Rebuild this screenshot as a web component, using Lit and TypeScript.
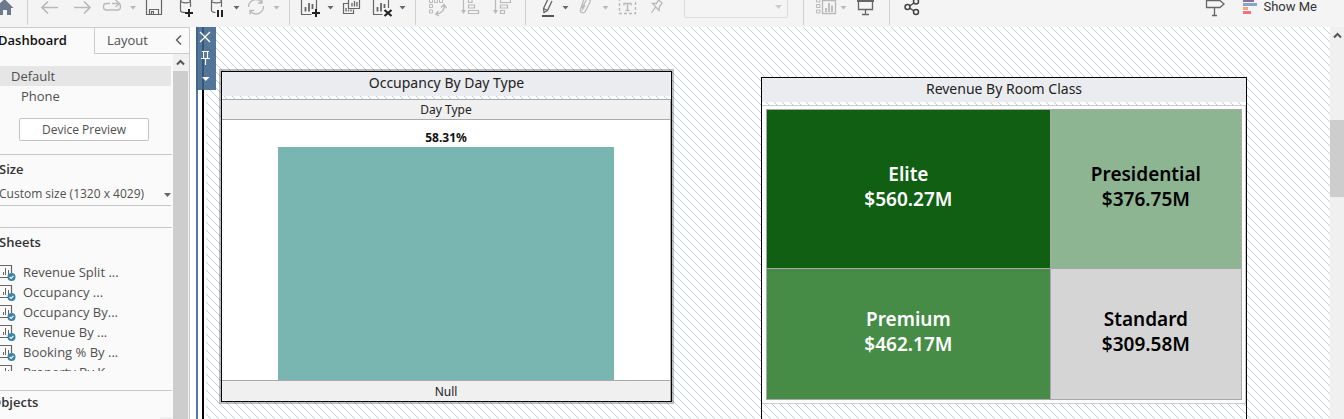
import { LitElement, html, svg, css } from "lit";
import { customElement } from "lit/decorators.js";

const DARK = "#666";
const LIGHT = "#b9b9b9";

const caret = (x: number, color: string) => svg`<path d="M${x - 3} 6h6l-3 3.5z" fill=${color} />`;

/* Toolbar buttons, in groups; each is drawn in a box 27px high. */
interface Tool { label: string; width: number; art: unknown; }

const GROUPS: Tool[][] = [
  [{ label: "Home", width: 27, art: svg`<path d="M4.500-1L13.500 8H11v7H7V10H3v5H-1V8h-4z" fill="#6c7a8c" />` }],
  [
    { label: "Undo", width: 32, art: svg`<path d="M30 7.500H14.500M20 1.500l-6 6 6 6" stroke=${LIGHT} stroke-width="1.700" fill="none" />` },
    { label: "Redo", width: 36, art: svg`<path d="M14 7.500H29.500M24 1.500l6 6-6 6" stroke=${LIGHT} stroke-width="1.700" fill="none" />` },
    { label: "Replay", width: 46, art: svg`<path d="M14 3.500H10.500a3 3 0 0 0-3 3v.500a3 3 0 0 0 3 3h11a3 3 0 0 0 3-3v-.500a3 3 0 0 0-3-3H16M19.500 0l4 3.500-4 3.500" stroke=${LIGHT} stroke-width="1.300" fill="none" />${caret(37, LIGHT)}` },
    { label: "Save", width: 28, art: svg`<path d="M4.500-2V14.500h15V-2M7.500 14V9.500h9V14M9.500 14v-2.500h2V14" stroke=${DARK} stroke-width="1.200" fill="none" />` },
    { label: "New data source", width: 32, art: svg`<path d="M10.500 1.500v9c0 1 2 2 5 2M20.500 1.500V7" stroke=${DARK} stroke-width="1.200" fill="none" /><ellipse cx="15.500" cy="1" rx="5" ry="1.800" stroke=${DARK} stroke-width="1.200" fill="none" /><path d="M19 9v8M15 13h8" stroke="#222" stroke-width="2" />` },
    { label: "Pause updates", width: 43, art: svg`<path d="M9.500 1.500v9c0 1 2 2 4 2M19.500 1.500V7" stroke=${DARK} stroke-width="1.200" fill="none" /><ellipse cx="14.500" cy="1" rx="5" ry="1.800" stroke=${DARK} stroke-width="1.200" fill="none" /><path d="M16 10v7M20 10v7" stroke="#222" stroke-width="2" />${caret(34.5, DARK)}` },
    { label: "Refresh", width: 44, art: svg`<path d="M3.500 7a7.500 7.500 0 0 1 13-5M18.500 6a7.500 7.500 0 0 1-13 5.500M17 -1v4h-4M5 14.500v-4h4" stroke=${LIGHT} stroke-width="1.300" fill="none" />${caret(31.5, LIGHT)}` },
  ],
  [
    { label: "New worksheet", width: 49, art: svg`<path d="M11.500-2V14.500h10M26.500-2V9" stroke=${DARK} stroke-width="1.200" fill="none" /><path d="M15.500 7v4.500M19 3v8.500M22.500 4v5" stroke=${DARK} stroke-width="1.800" /><path d="M26 9v8M22 13h8" stroke="#222" stroke-width="2" />${caret(40.5, DARK)}` },
    { label: "Duplicate", width: 27, art: svg`<path d="M9.500 3.500h-5v10h10v-4M9.500-2V8.500h11V-2" stroke=${DARK} stroke-width="1.200" fill="none" /><path d="M7 8v3.500M9.500 9.500v2M12 9.500v2M13 3v3.500M15.500 1v5.500M18 2v4.500" stroke=${DARK} stroke-width="1.300" />` },
    { label: "Clear sheet", width: 49, art: svg`<path d="M7.500-2V14.500h9M22.500-2V8" stroke=${DARK} stroke-width="1.200" fill="none" /><path d="M11.500 7v4.500M15 3v8.500M18.500 4v4" stroke=${DARK} stroke-width="1.800" /><path d="M18.500 10l7 6M25.500 10l-7 6" stroke="#222" stroke-width="2.200" />${caret(36.5, DARK)}` },
  ],
  [
    { label: "Swap", width: 38, art: svg`<path d="M13.500-.500h3v3h-3zM18.500-.500h3v3h-3zM23.500-.500h3v3h-3zM13.500 4.500h3v3h-3zM13.500 10h3v3h-3z" stroke=${LIGHT} fill="none" /><path d="M28 5c1 5-3 9-8 9M22.500 11l-3 3 3.500 2M25 7.500l3-3 2.500 3.500" stroke=${LIGHT} stroke-width="1.300" fill="none" />` },
    { label: "Sort ascending", width: 31, art: svg`<path d="M9.500-1V11" stroke=${LIGHT} stroke-width="1.200" /><path d="M7 10h5l-2.500 4z" fill=${LIGHT} /><path d="M14.500-.500h3.500v3h-3.500zM14.500 5h6v3h-6zM14.500 10.500h10v3h-10z" stroke=${LIGHT} stroke-width="1.200" fill="none" />` },
    { label: "Sort descending", width: 40, art: svg`<path d="M10.500-1V11" stroke=${LIGHT} stroke-width="1.200" /><path d="M8 10h5l-2.500 4z" fill=${LIGHT} /><path d="M15.500-.500h10v3h-10zM15.500 5h7v3h-7zM15.500 10.500h4v3h-4z" stroke=${LIGHT} stroke-width="1.200" fill="none" />` },
  ],
  [
    { label: "Highlight", width: 48, art: svg`<path d="M22-1L17.500 8.500l.500 4 3.500-2L26 1M17.500 8.500l4 2" stroke=${DARK} stroke-width="1.300" fill="none" /><path d="M16 16h12" stroke="#555" stroke-width="2" />${caret(39.5, DARK)}` },
    { label: "Group", width: 41, art: svg`<path d="M8 8l4-7.500a2 2 0 0 1 4 1.500l-4.500 9a2.500 2.500 0 0 1-5-1.500L10-1M11 5L8 10.500" stroke=${LIGHT} stroke-width="1.200" fill="none" />${caret(31.5, LIGHT)}` },
    { label: "Show mark labels", width: 32, art: svg`<path d="M4.500-2V13.500h16V-2" stroke=${LIGHT} stroke-width="1.400" stroke-dasharray="3 2" fill="none" /><path d="M9 5.500V3.500h7V5.500M12.500 3.500v7M10.500 10.500h4" stroke=${LIGHT} stroke-width="1.400" fill="none" />` },
    { label: "Fix axes", width: 37, art: svg`<path d="M10.500-1L15.500 3.500M11.500 0L9.500 3.500 5.500 3.500l6.500 7 .500-4L15 3.500M8.500 7L4.500 13" stroke=${LIGHT} stroke-width="1.300" fill="none" />` },
  ],
  [
    { label: "Show cards", width: 48, art: svg`<path d="M12.500-1h3.500v3h-3.500zM12.500 4.500h3.500v3h-3.500zM12.500 10h3.500v3h-3.500z" stroke=${LIGHT} fill="none" /><path d="M18.500 .500h13v13h-13z" stroke=${LIGHT} stroke-width="1.300" fill="none" /><path d="M22 8v4M25 3v9M28 5.500v6.500" stroke=${LIGHT} stroke-width="1.800" />${caret(39.5, LIGHT)}` },
    { label: "Presentation mode", width: 37, art: svg`<path d="M5 1h17" stroke=${DARK} stroke-width="2" /><path d="M6.500 1V9.500h14V1M13.500 9.500v5M10 14.500h7" stroke=${DARK} stroke-width="1.300" fill="none" />` },
  ],
  [{ label: "Share", width: 40, art: svg`<g stroke="#444" stroke-width="1.500" fill="none"><circle cx="17.500" cy="7" r="2.500" /><circle cx="26" cy="1.500" r="2.500" /><circle cx="26" cy="12" r="2.500" /><path d="M19.500 6L24 3M19.500 8L24 11" /></g>` }],
];

const SHEETS = ["Revenue Split ...", "Occupancy ...", "Occupancy By...", "Revenue By ...", "Booking % By ...", "Property By K..."];

const ROOMS = [
  { name: "Elite", value: "$560.27M", tone: "elite" },
  { name: "Presidential", value: "$376.75M", tone: "presidential" },
  { name: "Premium", value: "$462.17M", tone: "premium" },
  { name: "Standard", value: "$309.58M", tone: "standard" },
];

const upArrow = html`<svg width="15" height="17" viewBox="0 0 15 17" aria-hidden="true"><path d="M4 10.500l3.500-3.500 3.500 3.500" stroke="#555" stroke-width="2" fill="none" /></svg>`;

@customElement("tool-bar")
export class ToolBar extends LitElement {
  static styles = css`
    :host { display: flex; height: 27px; overflow: hidden; background: #f4f4f4; }
    .group { display: flex; }
    .rule { width: 1px; height: 25px; background: #d0d0d0; }
    button { border: 0; padding: 0; background: none; height: 27px; display: block; }
    svg { display: block; }
    .fit { width: 104px; height: 30px; margin: -12px 15px 0 0; border: 1px solid #d4d4d4; border-radius: 2px; appearance: none; background: #f4f4f4; }
    .fitbox { display: grid; }
    .fitbox > * { grid-area: 1 / 1; }
    .fitbox svg { pointer-events: none; z-index: 1; margin-left: 86px; }
    .spacer { flex: 1; }
    .show { display: flex; margin-right: 27px; }
    .show span { font: 13px/14px Roboto, sans-serif; color: #333; }
  `;
  render() {
    return html`
      ${GROUPS.map((g, i) => html`
        <div class="group">
          ${g.map((t) => html`<button aria-label=${t.label}>
            <svg width=${t.width} height="27" viewBox="0 0 ${t.width} 27">${t.art}</svg>
          </button>`)}
          ${i === 4 ? html`<div class="fitbox">
            <select class="fit" aria-label="Fit" disabled><option></option></select>
            <svg width="16" height="27" viewBox="0 0 16 27"><path d="M5 5h7l-3.500 4z" fill="#ccc" /></svg>
          </div>` : ""}
        </div>
        ${i < GROUPS.length - 1 ? html`<div class="rule"></div>` : ""}`)}
      <div class="spacer"></div>
      <button aria-label="Data guide">
        <svg width="36" height="27" viewBox="0 0 36 27"><path d="M5.500 .500h13.500l4 3.500-4 3.500H5.500zM13.500 8v7M11 15.500h5" stroke="#666" stroke-width="1.300" fill="none" /></svg>
      </button>
      <button class="show">
        <svg width="26" height="27" viewBox="0 0 26 27">
          <path d="M6 0h11v2H6z" fill="#8c6d9b" /><path d="M6 3h14v3H6z" fill="#85a5cb" />
          <path d="M6 7h5v3H6z" fill="#f5a57c" /><path d="M6 11h8v3H6z" fill="#f76f82" />
        </svg>
        <span>Show Me</span>
      </button>`;
  }
}

@customElement("side-pane")
export class SidePane extends LitElement {
  static styles = css`
    :host { display: flex; flex-direction: column; width: 190px; box-sizing: border-box; border-right: 1px solid #ccc; background: #fafafa; font: 13px/20px "Open Sans", sans-serif; color: #505050; overflow: hidden; }
    button, select { font: inherit; color: inherit; }
    .tabs { display: flex; border-top: 1px solid #ccc; height: 27px; box-sizing: border-box; }
    .tab { border: 0; padding: 0 0 2px; background: none; text-align: left; }
    .on { width: 94px; margin-left: -2px; flex: none; font-weight: 600; color: #111; margin-right: 2px; }
    .rest { flex: 1; display: flex; justify-content: space-between; border: 1px solid #ccc; border-width: 0 0 1px 1px; padding: 0 4px 0 12px; }
    .body { display: flex; flex: 1; }
    .content { flex: 1; min-width: 0; padding-top: 12px; overflow: hidden; }
    .bar { width: 16px; background: #f0f0f0; }
    .bar svg { display: block; }
    .thumb { height: 348px; background: #cdcdcd; margin-right: 1px; }
    .device { display: block; width: 171px; border: 0; background: none; text-align: left; padding: 0 0 0 11px; }
    .device.active { background: #e6e6e6; }
    .device.sub { padding-left: 21px; }
    .preview { display: block; margin: 12px 0 13px 19px; width: 130px; height: 23px; border: 1px solid #c4c4c4; border-radius: 2px; background: #fff; padding: 0; font-size: 12px; line-height: 19px; }
    h2 { margin: 0; font: inherit; font-weight: 600; color: #333; }
    section { border-top: 1px solid #c8c8c8; margin: 0 1px 0 -9px; padding: 4px 0 0 8px; }
    .size { padding-bottom: 21px; }
    .pick { display: grid; margin-top: 5px; border-bottom: 1px solid #c4c4c4; margin-right: 1px; }
    .pick > * { grid-area: 1 / 1; }
    .pick select { appearance: none; border: 0; background: none; padding: 0 0 1px; height: 21px; font-size: 12px; }
    .pick svg { justify-self: end; align-self: center; pointer-events: none; }
    ul { list-style: none; margin: 10px 0 0; padding: 0; height: 109px; overflow: hidden; }
    li { display: flex; gap: 7px; }
    .sheets { padding-bottom: 19px; }
    .objects { padding: 1px 0 0; }
    .stub { height: 4px; width: 12px; margin: 5px 0 0 auto; background: #f0f0f0; }
  `;
  render() {
    return html`
      <div class="tabs" role="tablist">
        <button class="tab on" role="tab" aria-selected="true">Dashboard</button>
        <div class="rest">
          <button class="tab" role="tab" aria-selected="false">Layout</button>
          <button class="tab" aria-label="Collapse pane">
            <svg width="12" height="24" viewBox="0 0 12 24"><path d="M8 7.500L3.500 12 8 16.500" stroke="#555" stroke-width="1.300" fill="none" /></svg>
          </button>
        </div>
      </div>
      <div class="body">
        <div class="content">
          <button class="device active">Default</button>
          <button class="device sub">Phone</button>
          <button class="preview">Device Preview</button>
          <section class="size">
            <h2 id="size">Size</h2>
            <div class="pick">
              <select aria-labelledby="size"><option>Custom size (1320 x 4029)</option></select>
              <svg width="8" height="8" viewBox="0 0 8 8" aria-hidden="true"><path d="M1 2h7L4.500 6z" fill="#666" /></svg>
            </div>
          </section>
          <section class="sheets">
            <h2>Sheets</h2>
            <ul>
              ${SHEETS.map((s) => html`<li>
                <svg width="17" height="20" viewBox="0 0 17 20" aria-hidden="true">
                  <path d="M-2 3.500H12.500V15.500H-2" stroke="#666" stroke-width="1.200" fill="none" />
                  <path d="M4.500 10v3M6.500 6v7M9.500 8v5" stroke="#666" />
                  <circle cx="12.500" cy="15" r="4" fill="#3c84a6" />
                  <path d="M10.700 15l1.400 1.400 2.400-2.600" stroke="#fff" stroke-width="1.100" fill="none" />
                </svg><span>${s}</span></li>`)}
            </ul>
          </section>
          <section class="objects"><h2>Objects</h2><div class="stub"></div></section>
        </div>
        <div class="bar">${upArrow}<div class="thumb"></div></div>
      </div>`;
  }
}

@customElement("dashboard-canvas")
export class DashboardCanvas extends LitElement {
  static styles = css`
    :host { display: flex; flex: 1; min-width: 0; position: relative; background: #fff; padding-left: 6px; }
    .frame { flex: 1; display: flex; border-left: 2px solid #557a9c; padding-left: 4px; }
    .edge { width: 2px; margin-right: 2px; background: #000; }
    .hatch { flex: 1; padding: 44px 83px 0 15px; display: grid; grid-template-columns: 451fr 486fr; column-gap: 89px; align-items: start; }
    .hatch, .strip { background: #fff url("data:image/svg+xml,%3Csvg xmlns='http://www.w3.org/2000/svg' width='8' height='8' shape-rendering='crispEdges'%3E%3Cpath fill='%23bccfe0' d='M0 0h1v1h-1zM1 1h1v1h-1zM2 2h1v1h-1zM3 3h1v1h-1zM4 4h1v1h-1zM5 5h1v1h-1zM6 6h1v1h-1zM7 7h1v1h-1z'/%3E%3C/svg%3E") fixed; }
    .card { border: 1px solid #000; font: 12px/19px "Noto Sans", sans-serif; color: #222; margin: 0; }
    .card h2 { margin: 0; padding-bottom: 2px; font: 14px/22px "Noto Sans", sans-serif; text-align: center; background: #ebecf0; color: #222; }
    .strip { height: 3px; }
    .chosen { box-shadow: 0 0 0 2px rgba(0, 0, 0, 0.25); }
    .axis { text-align: center; background: #f0f0f0; border: 1px solid #aaa; border-left: 0; line-height: 19px; }
    .axis.foot { border-bottom: 0; padding-top: 1px; }
    .plot { background: #fff; border-right: 1px solid #aaa; height: 260px; display: flex; flex-direction: column; }
    .amount { text-align: center; font-weight: 700; padding: 8px 0 0; color: #111; }
    .column { flex: 1; width: 75%; margin: 0 auto; background: #79b6b1; }
    .rooms { margin-top: 6px; border-bottom: 0; align-self: stretch; }
    .mat { background: #fff; border: 1px solid #ccc; border-left: 0; padding: 3px 3px 3px 4px; }
    .map { display: grid; grid-template-columns: 284fr 191fr; grid-template-rows: 158px 130px; gap: 1px; padding: 1px; background: #a9a9a9; }
    .room { display: flex; flex-direction: column; justify-content: center; align-items: center; padding-bottom: 5px; font: 600 19px/25px "Noto Sans", sans-serif; }
    .elite { background: #115f13; color: #fff; }
    .presidential { background: #8eb592; color: #000; }
    .premium { background: #468c47; color: #fff; }
    .standard { background: #d5d5d5; color: #000; }
    .handle { position: absolute; left: 6px; top: 0; width: 20px; height: 63px; background: rgba(60, 99, 138, 0.88); display: flex; flex-direction: column; }
    .handle button { border: 0; padding: 0; background: none; height: 21px; }
    .handle svg { display: block; }
    .scroll { width: 14px; background: #f0f0f0; }
    .scroll svg { display: block; }
    .thumb { height: 77px; margin-top: 76px; background: #cdcdcd; }
  `;
  render() {
    return html`
      <div class="frame"><div class="edge"></div><div class="hatch">
        <figure class="card chosen">
          <h2>Occupancy By Day Type</h2>
          <div class="strip"></div>
          <div class="axis">Day Type</div>
          <div class="plot"><div class="amount">58.31%</div><div class="column"></div></div>
          <div class="axis foot">Null</div>
        </figure>
        <figure class="card rooms">
          <h2>Revenue By Room Class</h2>
          <div class="strip"></div>
          <div class="mat"><div class="map">
            ${ROOMS.map((r) => html`<div class="room ${r.tone}"><span>${r.name}</span><span>${r.value}</span></div>`)}
          </div></div>
        </figure>
      </div></div>
      <div class="scroll">${upArrow}<div class="thumb"></div></div>
      <div class="handle">
        <button aria-label="Remove from dashboard"><svg width="20" height="21" viewBox="0 0 20 21"><path d="M4 5l10 10M14 5L4 15" stroke="#fff" stroke-width="1.400" /></svg></button>
        <button aria-label="Fix position"><svg width="20" height="21" viewBox="0 0 20 21"><path d="M6 3.500h7M7.500 4v6M11.500 4v6M5 10.500h9M9.500 11v6" stroke="#fff" stroke-width="1.200" fill="none" /></svg></button>
        <button aria-label="More options"><svg width="20" height="21" viewBox="0 0 20 21"><path d="M6 8h7.500l-3.750 4z" fill="#fff" /></svg></button>
      </div>`;
  }
}

@customElement("app-root")
export class AppRoot extends LitElement {
  static styles = css`
    :host { display: flex; flex-direction: column; height: 100vh; overflow: hidden; }
    .work { flex: 1; display: flex; min-height: 0; }
  `;
  render() {
    return html`<tool-bar></tool-bar><div class="work"><side-pane></side-pane><dashboard-canvas></dashboard-canvas></div>`;
  }
}
